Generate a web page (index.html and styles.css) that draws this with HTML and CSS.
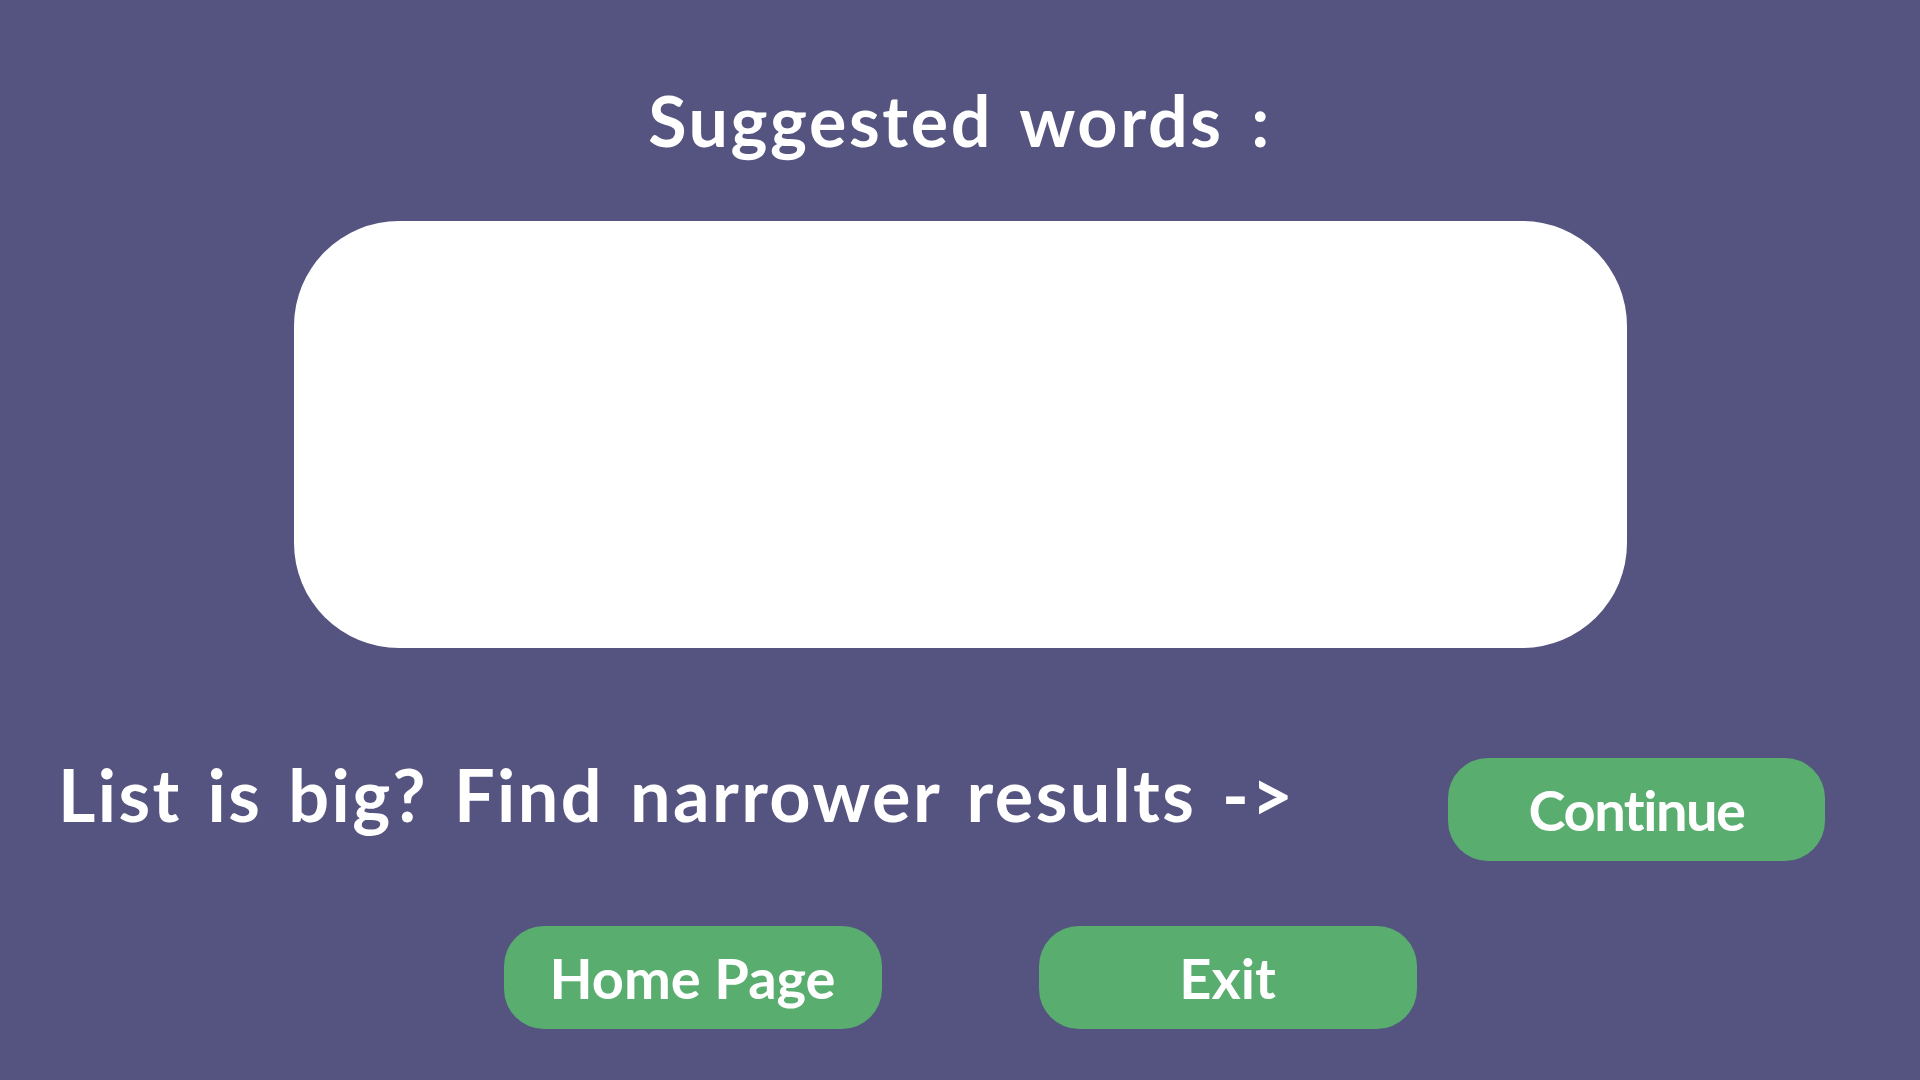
FILE: index.html
```html
<!DOCTYPE html>
<html lang="en">
<head>
<meta charset="utf-8">
<title>Suggested words</title>
<link rel="stylesheet" href="styles.css">
</head>
<body>
<main class="screen">
  <h1 class="title">Suggested words :</h1>
  <div class="word-box"></div>
  <div class="narrow-row">
    <p class="narrow-text">List is big? Find narrower results -&gt;</p>
    <button class="btn btn-continue">Continue</button>
  </div>
  <div class="nav-row">
    <button class="btn btn-nav">Home Page</button>
    <button class="btn btn-nav">Exit</button>
  </div>
</main>
</body>
</html>
```
FILE: styles.css
```css
html, body {
  margin: 0;
  padding: 0;
  width: 1920px;
  height: 1080px;
  background: #55537f;
  overflow: hidden;
}

.screen {
  display: flex;
  flex-direction: column;
  align-items: center;
  padding-top: 78px;
  font-family: "Comic Sans MS", "Lato", "Open Sans", sans-serif;
  font-variant-ligatures: none;
  color: #ffffff;
}

.title {
  margin: 0;
  font-size: 70px;
  line-height: 84px;
  font-weight: 700;
  letter-spacing: 2.6px;
  word-spacing: 8px;
}

.word-box {
  margin-top: 59px;
  width: 1333px;
  height: 427px;
  background: #ffffff;
  border-radius: 105px;
}

.narrow-row {
  margin-top: 103px;
  width: 1920px;
  box-sizing: border-box;
  padding: 0 95px 0 58px;
  display: flex;
  justify-content: space-between;
  align-items: flex-start;
}

.narrow-text {
  margin: 0;
  font-size: 72px;
  line-height: 86px;
  font-weight: 700;
  letter-spacing: 2.4px;
  word-spacing: 6px;
}

.btn {
  font-family: inherit;
  font-variant-ligatures: none;
  color: #ffffff;
  background: #58ad6f;
  border: none;
  border-radius: 40px;
  width: 377px;
  height: 103px;
  padding: 0;
  font-weight: 700;
  display: flex;
  align-items: center;
  justify-content: center;
  line-height: 1.2;
}

.btn-continue {
  margin-top: 7px;
  font-size: 56px;
  letter-spacing: -1.5px;
}

.nav-row {
  margin-top: 65px;
  display: flex;
  gap: 157px;
}

.btn-nav {
  width: 378px;
  font-size: 56px;
}
```
